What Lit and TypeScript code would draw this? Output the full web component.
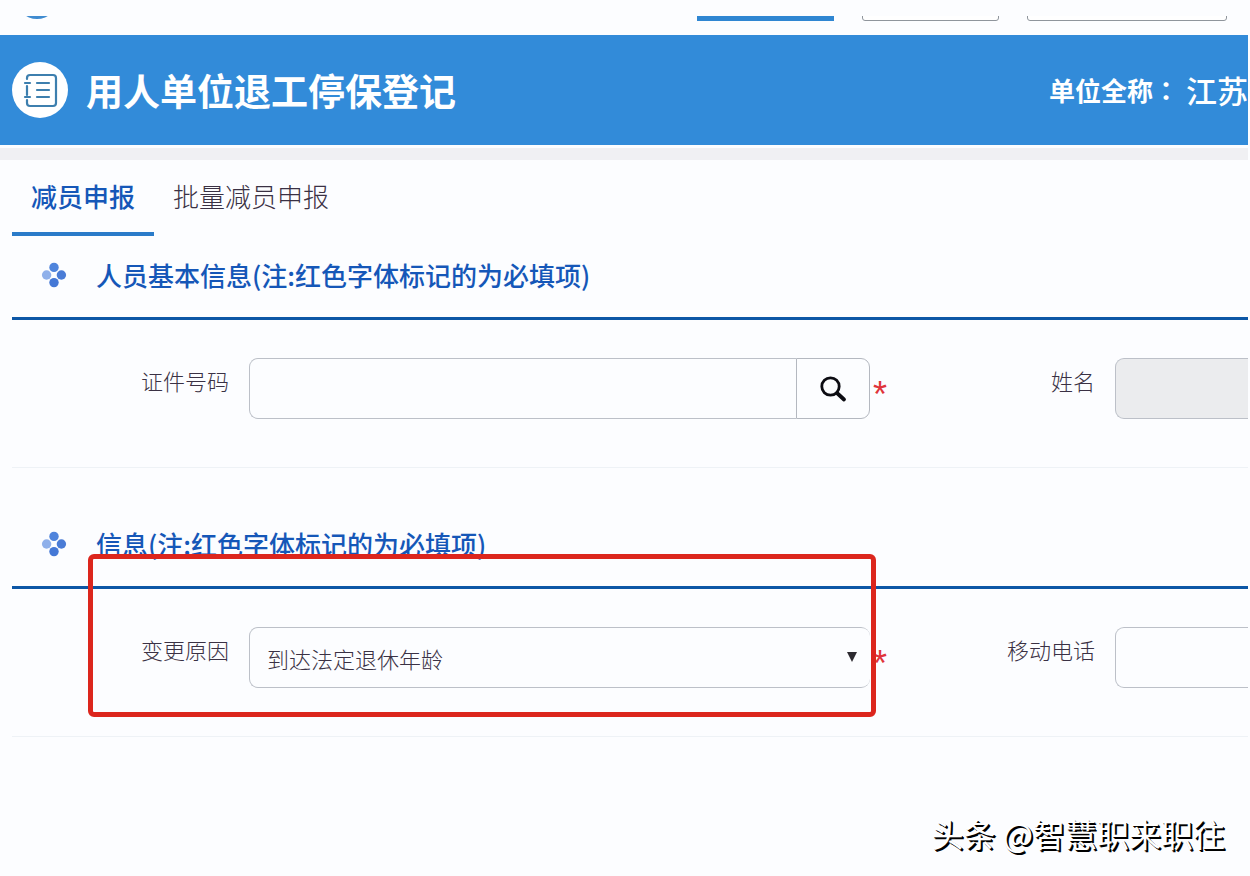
import { LitElement, html, css } from "lit";
import { customElement, property } from "lit/decorators.js";

@customElement("section-title")
class SectionTitle extends LitElement {
  @property() text = "";

  static styles = css`
    :host {
      display: flex;
      align-items: center;
      gap: 29px;
      height: 84px;
      padding: 0 0 4px 29px;
      border-bottom: 3px solid #0d57a6;
      box-sizing: border-box;
    }
    .mark {
      flex: none;
      width: 26px;
      height: 26px;
    }
    .text {
      margin: 0;
      font-size: 26px;
      line-height: 40px;
      font-weight: 500;
      color: #1557b8;
      white-space: nowrap;
    }
  `;

  render() {
    return html`
      <svg class="mark" viewBox="0 0 26 26" aria-hidden="true">
        <circle cx="13" cy="5.4" r="4.7" fill="#4f84dc" />
        <circle cx="5.6" cy="13" r="4.7" fill="#8fb0ea" />
        <circle cx="20.4" cy="13" r="4.7" fill="#4a7cd6" />
        <circle cx="13" cy="20.6" r="4.7" fill="#4478d6" />
      </svg>
      <h2 class="text">${this.text}</h2>
    `;
  }
}

@customElement("app-root")
class AppRoot extends LitElement {
  static styles = css`
    :host {
      display: block;
      min-height: 100vh;
      box-sizing: border-box;
      padding-right: 2px;
      overflow: hidden;
      position: relative;
      background: #fcfdff;
      color: #3a3144;
      font-family: "Noto Sans CJK SC", "Liberation Sans", sans-serif;
      font-size: 22px;
      font-weight: 300;
    }
    .topbar {
      display: flex;
      height: 5px;
      overflow: hidden;
      padding: 0 21px 0 16px;
      margin: 16px 0 14px;
      align-items: flex-end;
      gap: 28px;
    }
    .logo {
      flex: none;
      width: 42px;
      height: 42px;
      margin: 0 auto 2px 0;
      border-radius: 50%;
      background: #3f8bd0;
    }
    .top-button {
      flex: none;
      width: 137px;
      height: 40px;
      padding: 0;
      border: 1px solid #8f959c;
      border-radius: 3px;
      background: #fff;
    }
    .top-button.active {
      border: 0;
      border-radius: 0;
      background: #2f86d2;
    }
    .top-button.wide {
      width: 200px;
    }
    .banner {
      display: flex;
      align-items: center;
      height: 110px;
      padding-left: 12px;
      background: #328bd9;
      color: #fff;
      overflow: hidden;
      white-space: nowrap;
    }
    .badge {
      flex: none;
      width: 56px;
      height: 56px;
      margin-right: 18px;
    }
    .title {
      margin: 0 auto 0 0;
      font-size: 37px;
      line-height: 56px;
      font-weight: 700;
    }
    .unit {
      display: flex;
      align-items: center;
      font-size: 26px;
      line-height: 40px;
      font-weight: 700;
    }
    .colon {
      font-family: "Noto Sans CJK TC", sans-serif;
    }
    .unit-name {
      margin-left: 7px;
      font-size: 31px;
      font-weight: 500;
    }
    .strip {
      height: 12px;
      margin-top: 3px;
      background: #f0f0f3;
    }
    .content {
      padding-left: 12px;
    }
    .tabs {
      display: flex;
    }
    .tab {
      height: 76px;
      padding: 0 19px;
      border: 0;
      border-bottom: 4px solid transparent;
      background: none;
      color: inherit;
      font: inherit;
      font-size: 26px;
      line-height: 40px;
    }
    .tab.active {
      border-color: #2a7bc9;
      color: #1557b8;
      font-weight: 500;
    }
    .panel {
      margin-bottom: 37px;
      border-bottom: 1px solid #eef2f6;
    }
    .row {
      display: grid;
      position: relative;
      grid-template-columns: 217px minmax(0, 14fr) 205px minmax(0, 3fr);
      grid-template-rows: auto;
      column-gap: 20px;
      padding: 38px 0 48px;
    }
    .label {
      text-align: right;
      line-height: 32px;
      padding-top: 6px;
    }
    .field {
      position: relative;
      display: flex;
    }
    .control {
      flex: 1;
      min-width: 0;
      height: 61px;
      box-sizing: border-box;
      padding: 0 17px;
      border: 1px solid #bcc0c8;
      border-radius: 9px;
      background: #fcfdff;
      color: inherit;
      font: inherit;
    }
    .control.joined {
      border-radius: 9px 0 0 9px;
      border-right: 0;
    }
    .control:disabled {
      background: #ebecee;
    }
    select.control {
      appearance: none;
      border-right: 0;
    }
    .search {
      display: grid;
      place-items: center;
      width: 74px;
      height: 61px;
      padding: 0;
      border: 1px solid #b4b8c0;
      border-radius: 0 9px 9px 0;
      background: #fcfdff;
    }
    .search svg {
      width: 28px;
      height: 28px;
    }
    .star {
      position: absolute;
      left: 100%;
      top: 13px;
      margin-left: 3px;
      color: #e0343a;
      font-family: "Liberation Sans", sans-serif;
      font-size: 36px;
      line-height: 48px;
      font-weight: 400;
    }
    .caret {
      position: absolute;
      right: 12px;
      top: 24px;
      width: 12px;
      height: 12px;
      pointer-events: none;
    }
    .highlight {
      position: absolute;
      grid-area: 1 / 1 / 2 / 3;
      left: 76px;
      right: -6px;
      top: -73px;
      bottom: -29px;
      border: 5px solid #dc261d;
      border-radius: 6px;
      pointer-events: none;
    }
    .signature {
      position: absolute;
      right: 25px;
      bottom: 19px;
      font-size: 32px;
      line-height: 48px;
      font-weight: 400;
      color: #fff;
      text-shadow: 1px 1px 0 #000, 2px 2px 0 #000;
      white-space: nowrap;
    }
  `;

  render() {
    return html`
      <nav class="topbar">
        <span class="logo"></span>
        <button class="top-button active" type="button"></button>
        <button class="top-button" type="button"></button>
        <button class="top-button wide" type="button"></button>
      </nav>
      <header class="banner">
        <svg class="badge" viewBox="0 0 56 56" aria-hidden="true">
          <circle cx="28" cy="28" r="28" fill="#fff" />
          <g fill="none" stroke="#3d7fae" stroke-width="2.2" stroke-linecap="round">
            <path d="M15 17V16Q15 13 18 13H41Q44 13 44 16V41Q44 44 41 44H18Q15 44 15 41V38M15 24V33" />
            <path d="M13 21H18M13 35H18M25 21H37M25 28H37M25 35H37" />
          </g>
        </svg>
        <h1 class="title">用人单位退工停保登记</h1>
        <div class="unit">
          <span>单位全称<span class="colon">：</span></span><span class="unit-name">江苏</span>
        </div>
      </header>
      <div class="strip"></div>
      <main class="content">
        <div class="tabs" role="tablist">
          <button class="tab active" type="button" role="tab" aria-selected="true">减员申报</button>
          <button class="tab" type="button" role="tab" aria-selected="false">批量减员申报</button>
        </div>
        <section class="panel">
          <section-title text="人员基本信息(注:红色字体标记的为必填项)"></section-title>
          <div class="row">
            <label class="label" for="idno">证件号码</label>
            <div class="field">
              <input class="control joined" id="idno" type="text" />
              <button class="search" type="button" aria-label="查询">
                <svg viewBox="0 0 28 28" fill="none" stroke="#0c0c12">
                  <circle cx="11.5" cy="11.5" r="8.7" stroke-width="2.8" />
                  <path d="M18 18L25 24.5" stroke-width="3.8" stroke-linecap="round" />
                </svg>
              </button>
              <span class="star">*</span>
            </div>
            <label class="label" for="name">姓名</label>
            <div class="field">
              <input class="control joined" id="name" type="text" disabled />
            </div>
          </div>
        </section>
        <section class="panel">
          <section-title text="信息(注:红色字体标记的为必填项)"></section-title>
          <div class="row">
            <label class="label" for="reason">变更原因</label>
            <div class="field">
              <select class="control" id="reason">
                <option>到达法定退休年龄</option>
              </select>
              <svg class="caret" viewBox="0 0 12 12" aria-hidden="true">
                <path d="M1 1H11L6 11Z" fill="#2c2a30" />
              </svg>
              <span class="star">*</span>
            </div>
            <label class="label" for="phone">移动电话</label>
            <div class="field">
              <input class="control joined" id="phone" type="tel" />
            </div>
            <div class="highlight"></div>
          </div>
        </section>
      </main>
      <div class="signature">头条 @智慧职来职往</div>
    `;
  }
}
